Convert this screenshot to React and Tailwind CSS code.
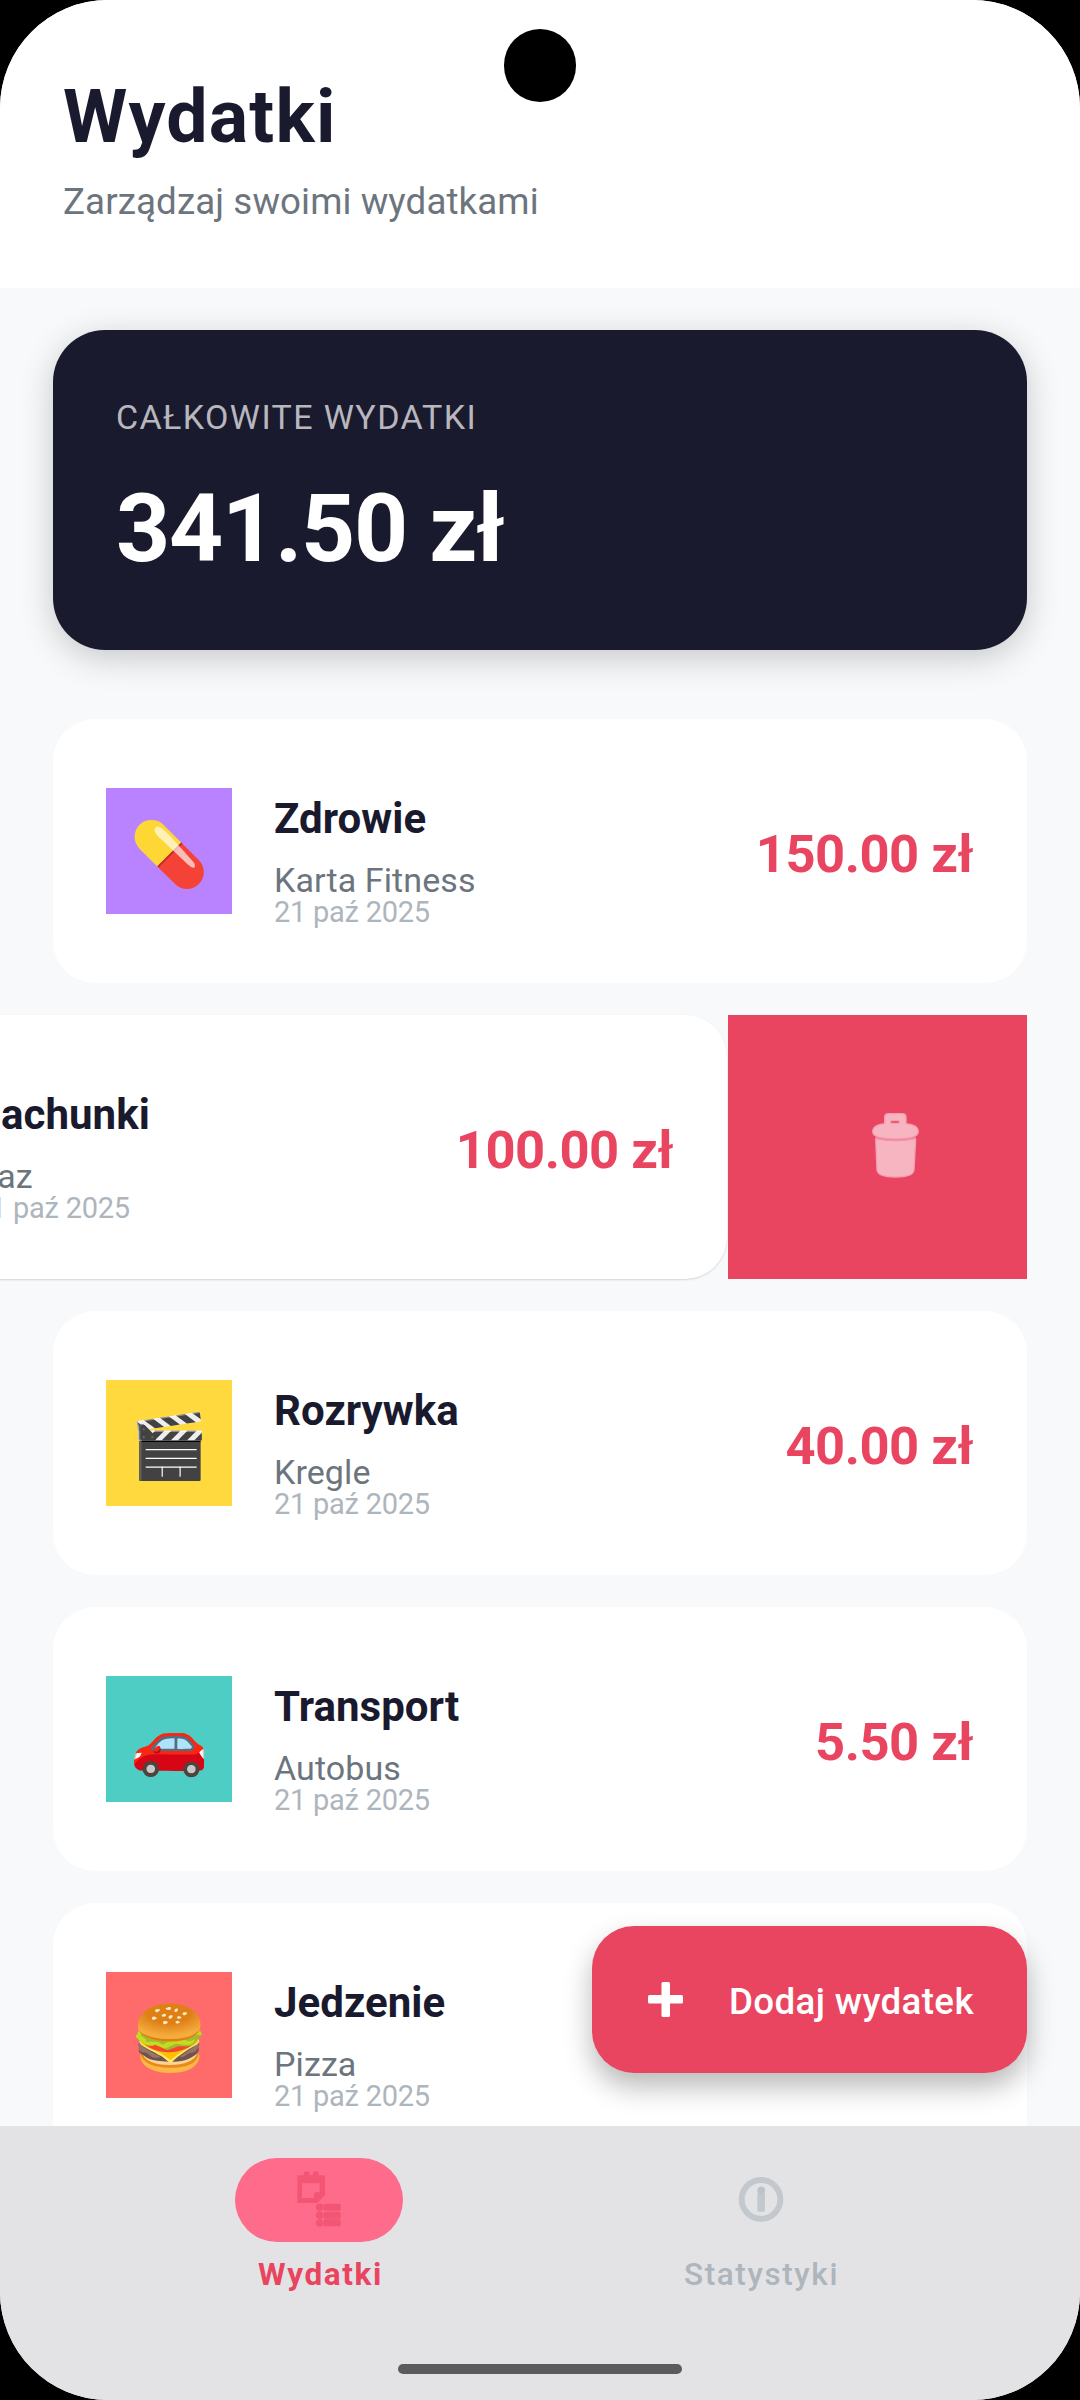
const expenses = [
  { name: 'Zdrowie', note: 'Karta Fitness', amount: '150.00 zł', tile: 'bg-[#b983ff]', icon: '💊' },
  { name: 'Rachunki', note: 'Gaz', amount: '100.00 zł', tile: 'bg-[#95e1d3]', icon: '📄', swiped: true },
  { name: 'Rozrywka', note: 'Kregle', amount: '40.00 zł', tile: 'bg-[#ffd93d]', icon: '🎬' },
  { name: 'Transport', note: 'Autobus', amount: '5.50 zł', tile: 'bg-[#4ecdc4]', icon: '🚗' },
  { name: 'Jedzenie', note: 'Pizza', tile: 'bg-[#ff6b6b]', icon: '🍔' },
];

function TrashIcon() {
  return (
    <svg className="ml-[112px] mt-[65px] h-[120px] w-[120px]" viewBox="0 0 360 360">
      <g fill="#f7b4c1" stroke="#f4a0b1" strokeWidth="4" strokeLinejoin="round">
        <path d="M107 176 Q167 188 227 176 L222 270 Q220 291 167 291 Q113 291 111 270 Z" />
        <path
          fillRule="evenodd"
          d="M98 154 Q98 135 134 131 V112 Q134 101 146 101 H186 Q198 101 198 112 V131 Q235 135 235 154 Q235 168 214 173 Q167 182 119 173 Q98 168 98 154 Z M152 122 V130 H178 V122 Z"
        />
      </g>
      <path d="M107 173 Q167 187 227 173" fill="none" stroke="#f18da1" strokeWidth="6" />
    </svg>
  );
}

function ExpensesIcon() {
  return (
    <svg className="h-[84px] w-[168px]" viewBox="45 54 504 252" fill="#f35675">
      <circle cx="260" cy="103" r="9" />
      <circle cx="287" cy="103" r="9" />
      <path
        fillRule="evenodd"
        d="M236 106 H311 Q315 106 315 110 V166 L292 189 H236 Q232 189 232 185 V110 Q232 106 236 106 Z M246 130 V174 H282 V163 Q282 157 288 157 H299 V130 Z"
      />
      {[202, 226, 249].map((y) => (
        <g key={y}>
          <circle cx="299" cy={y} r="11.5" />
          <rect x="311" y={y - 11} width="51" height="21" rx="4" />
        </g>
      ))}
    </svg>
  );
}

function StatsIcon() {
  return (
    <svg className="h-[46px] w-[46px]" viewBox="0 0 138 138">
      <circle cx="69" cy="67" r="58" fill="none" stroke="#c2c8cd" strokeWidth="18" />
      <rect x="58" y="47" width="23" height="57" rx="4" fill="#c2c8cd" />
      <circle cx="69.500" cy="40" r="11.500" fill="#bdc4c9" />
    </svg>
  );
}

function Card({ item }) {
  return (
    <div
      className={`flex h-[264px] w-[974px] shrink-0 items-center rounded-[42px] bg-white pl-[53px] pr-[54px] ${
        item.swiped ? '-ml-[300px] shadow-[0_1px_2px_rgba(0,0,0,0.15)]' : ''
      }`}
    >
      <div className={`flex h-[126px] w-[126px] items-center justify-center pt-[7px] text-[63px] leading-none ${item.tile}`}>
        {item.icon}
      </div>
      <div className="ml-[42px] flex-1 self-start pt-[72px]">
        <div className="text-[42px] font-bold leading-[56px] tracking-[0.05px] text-[#1a1a2e]">{item.name}</div>
        <div className="mt-[17px] text-[34px] leading-[32px] tracking-[0.1px] text-[#6c757d]">{item.note}</div>
        <div className="text-[29px] leading-[32px] tracking-[-0.25px] text-[#adb5bd]">21 paź 2025</div>
      </div>
      {item.amount && (
        <div className="mt-[6px] text-[52.5px] font-bold leading-[60px] tracking-[-0.5px] text-[#e94560]">{item.amount}</div>
      )}
    </div>
  );
}

export default function App() {
  return (
    <div className="h-[2400px] w-[1080px] overflow-hidden bg-black font-['Roboto',sans-serif]">
      <div className="relative flex h-[2400px] flex-col overflow-hidden rounded-[108px] bg-[#f8f9fb]">
        <header className="h-[288px] shrink-0 bg-white pl-[63px] pt-[73px]">
          <h1 className="text-[73.5px] font-bold leading-[88px] tracking-[1.2px] text-[#1a1a2e]">Wydatki</h1>
          <p className="mt-[20px] text-[36.75px] leading-[42px] tracking-[0.08px] text-[#6c757d]">Zarządzaj swoimi wydatkami</p>
        </header>
        <div className="absolute left-[504px] top-[29px] h-[73px] w-[72px] rounded-full bg-black" />
        <main className="flex h-[1838px] shrink-0 flex-col overflow-hidden px-[53px] pt-[42px]">
          <section className="h-[320px] shrink-0 rounded-[52px] bg-[#1a1a2e] pl-[63px] pt-[66px] shadow-[0_8px_34px_rgba(0,0,0,0.2)]">
            <div className="text-[34px] leading-[42px] tracking-[1.4px] text-white/70">CAŁKOWITE WYDATKI</div>
            <div className="mt-[35px] text-[94.5px] font-bold leading-[112px] tracking-[-1.25px] text-white">341.50 zł</div>
          </section>
          <div className="mt-[69px] flex flex-col gap-[32px]">
            {expenses.map((e) => (
              <div key={e.name} className="flex">
                <Card item={e} />
                {e.swiped && (
                  <div className="ml-px flex h-[264px] w-[299px] shrink-0 items-start bg-[#e94560]">
                    <TrashIcon />
                  </div>
                )}
              </div>
            ))}
          </div>
        </main>
        <button className="absolute left-[592px] top-[1926px] flex h-[147px] w-[435px] items-center rounded-[42px] bg-[#e94560] pl-[56px] text-[36.75px] font-medium text-white shadow-[0_14px_28px_rgba(0,0,0,0.28)]">
          <svg className="h-[35px] w-[35px]" viewBox="0 0 35 35" fill="white">
            <rect x="0" y="13" width="35" height="8.500" rx="1.500" />
            <rect x="13.500" y="0" width="8.500" height="35" rx="1.500" />
          </svg>
          <span className="ml-[46px] mt-[4px] tracking-[0.35px]">Dodaj wydatek</span>
        </button>
        <nav className="flex flex-1 bg-[#e3e3e5] pt-[32px]">
          <div className="ml-[98px] flex w-[442px] flex-col items-center">
            <div className="h-[84px] w-[168px] rounded-full bg-[#ff6b8a]">
              <ExpensesIcon />
            </div>
            <div className="mt-[12px] pl-[3px] text-[31.5px] font-bold leading-[42px] tracking-[1.6px] text-[#e94560]">Wydatki</div>
          </div>
          <div className="flex w-[442px] flex-col items-center">
            <div className="flex h-[84px] items-center">
              <StatsIcon />
            </div>
            <div className="mt-[12px] pl-[1px] text-[31.5px] font-medium leading-[42px] tracking-[1.6px] text-[#adb5bd]">Statystyki</div>
          </div>
        </nav>
        <div className="absolute left-[398px] top-[2364px] h-[10px] w-[284px] rounded-full bg-[#5b5b5c]" />
      </div>
    </div>
  );
}
